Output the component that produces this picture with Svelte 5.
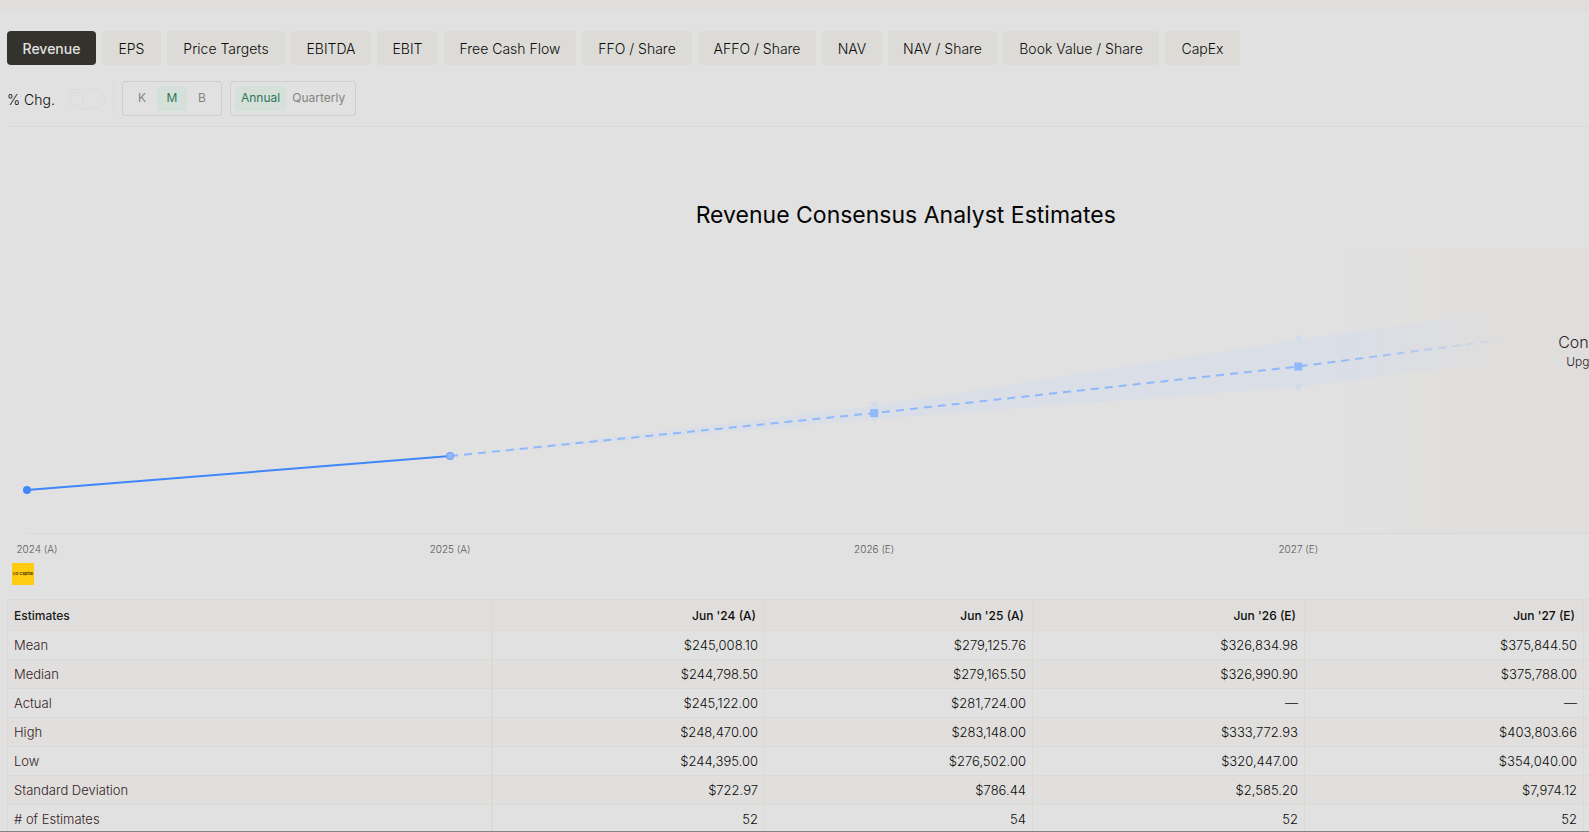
<script lang="ts">
  const metrics: Array<string> = [
    "Revenue", "EPS", "Price Targets", "EBITDA", "EBIT", "Free Cash Flow",
    "FFO / Share", "AFFO / Share", "NAV", "NAV / Share", "Book Value / Share", "CapEx"
  ];
  const units: Array<string> = ["K", "M", "B"];
  const periods: Array<string> = ["Annual", "Quarterly"];

  let metric = $state("Revenue");
  let unit = $state("M");
  let period = $state("Annual");
  let change = $state(false);

  const columns = ["Jun '24 (A)", "Jun '25 (A)", "Jun '26 (E)", "Jun '27 (E)"];
  const rows = [
    { name: "Mean", values: ["$245,008.10", "$279,125.76", "$326,834.98", "$375,844.50"] },
    { name: "Median", values: ["$244,798.50", "$279,165.50", "$326,990.90", "$375,788.00"] },
    { name: "Actual", values: ["$245,122.00", "$281,724.00", "—", "—"] },
    { name: "High", values: ["$248,470.00", "$283,148.00", "$333,772.93", "$403,803.66"] },
    { name: "Low", values: ["$244,395.00", "$276,502.00", "$320,447.00", "$354,040.00"] },
    { name: "Standard Deviation", values: ["$722.97", "$786.44", "$2,585.20", "$7,974.12"] },
    { name: "# of Estimates", values: ["52", "54", "52", "52"] }
  ];

  // chart points, in viewBox units
  const points = [
    { x: 20, y: 242, high: 242, low: 242, label: "2024 (A)" },
    { x: 443, y: 208, high: 208, low: 208, label: "2025 (A)" },
    { x: 867, y: 165, high: 158, low: 171, label: "2026 (E)" },
    { x: 1291, y: 118.5, high: 91.5, low: 139, label: "2027 (E)" },
    { x: 1715, y: 63, high: 32, low: 85, label: "" }
  ];
  const path = (list: Array<{ x: number, y: number }>) => list.map(p => `${p.x},${p.y}`).join(" ");
  const actual = path(points.slice(0, 2));
  const estimate = path(points.slice(1));
  const band = points.slice(1).map(p => `${p.x},${p.high}`)
    .concat(points.slice(1).reverse().map(p => `${p.x},${p.low}`))
    .join(" ");
</script>

<main class="page">
  <div class="strip"></div>
  <div class="panel">
    <nav class="tabs">
      {#each metrics as name}
        <button class="tab" class:active={name == metric} onclick={() => metric = name}>{name}</button>
      {/each}
    </nav>

    <div class="controls">
      <label class="change" for="change">% Chg.</label>
      <input id="change" class="toggle" type="checkbox" bind:checked={change} />
      <div class="divider"></div>
      <div class="group units">
        {#each units as name}
          <button class="option" class:selected={name == unit} onclick={() => unit = name}>{name}</button>
        {/each}
      </div>
      <div class="group">
        {#each periods as name}
          <button class="option" class:selected={name == period} onclick={() => period = name}>{name}</button>
        {/each}
      </div>
    </div>

    <h2>Revenue Consensus Analyst Estimates</h2>

    <div class="chart">
      <svg viewBox="0 0 1797 315">
        <polygon points={band} fill="#d9dee7" />
        <line x1="20" y1="285.5" x2="1777" y2="285.5" stroke="#d8d8d6" />
        <polyline points={actual} fill="none" stroke="#3f87fb" stroke-width="2" />
        <polyline points={estimate} fill="none" stroke="#91b8fb" stroke-width="2" stroke-dasharray="8 6" />
        {#each points.slice(2) as p}
          <path d="M{p.x - 4} {p.high - 4}h8l-4 8z" fill="#d2dbea" />
          <path d="M{p.x - 4} {p.low - 3}h8l-4 8z" fill="#d2dbea" />
          <rect x={p.x - 4} y={p.y - 4} width="8" height="8" fill="#91b8fb" />
        {/each}
        <circle cx="20" cy="242" r="4" fill="#3f87fb" />
        <circle cx="443" cy="208" r="3.5" fill="#91b8fb" stroke="#6c9ff8" />
        <!-- the first label is kept inside the plot's left edge -->
        {#each points as p}
          <text x={Math.max(p.x, 30)} y="305" text-anchor="middle">{p.label}</text>
        {/each}
      </svg>
      <div class="locked">
        <div class="message">
          <strong>Con</strong>
          <a href="#upgrade">Upg</a>
        </div>
      </div>
    </div>

    <svg class="logo" viewBox="0 0 22 22">
      <rect width="22" height="22" fill="#ffcc11" />
      <text x="11" y="12" text-anchor="middle">I/O Capital</text>
    </svg>

    <table>
      <colgroup>
        <col class="name" />
        <col class="c24" />
        <col class="c25" />
        <col class="c26" />
        <col class="c27" />
        <col />
      </colgroup>
      <thead>
        <tr>
          <th scope="col">Estimates</th>
          {#each columns as column}
            <th scope="col">{column}</th>
          {/each}
          <td></td>
        </tr>
      </thead>
      <tbody>
        {#each rows as row}
          <tr>
            <th scope="row">{row.name}</th>
            {#each row.values as value}
              <td>{value}</td>
            {/each}
            <td></td>
          </tr>
        {/each}
      </tbody>
    </table>
  </div>
</main>

<style>
  :global(body) {
    background-color: #e1e1e1;
  }
  .page {
    box-sizing: border-box;
    height: 100vh;
    overflow: hidden;
    border-bottom: 1px solid #858585;
    font-family: Inter, sans-serif;
    font-weight: 300;
    color: #0c0b0a;
  }
  .strip {
    height: 12px;
    background-color: #dfdedc;
  }
  /* wider than the window, the right side runs off the page */
  .panel {
    box-sizing: border-box;
    width: 114%;
    padding: 19px 7px 0;
  }
  button {
    font-family: inherit;
    font-weight: inherit;
    border: none;
    cursor: pointer;
  }
  .tabs {
    display: grid;
    grid-template-columns: 89px 59px 118px 80px 61px 132px 110px 118px 60px 109px 156px 75px;
    gap: 6px;
  }
  .tab {
    height: 34px;
    padding: 0;
    border-radius: 4px;
    background-color: #dcdbd7;
    color: #0c0b0a;
    font-size: 14px;
    white-space: nowrap;
  }
  .tab.active {
    background-color: #34322d;
    color: #e1e1e1;
    font-weight: 500;
  }
  .controls {
    display: flex;
    align-items: center;
    height: 35px;
    padding: 16px 0 10px;
    border-bottom: 1px solid #dadad9;
  }
  .change {
    width: 60px;
    padding-top: 2px;
    font-size: 14px;
  }
  .toggle {
    appearance: none;
    box-sizing: border-box;
    width: 38px;
    height: 20px;
    margin: 0 8px 0 0;
    padding: 2px;
    border: 1px solid #dcdbd7;
    border-radius: 10px;
  }
  .toggle::before {
    content: "";
    display: block;
    box-sizing: border-box;
    width: 14px;
    height: 14px;
    border: 1px solid #dcdbd7;
    border-radius: 50%;
  }
  .toggle:checked::before {
    margin-left: auto;
  }
  .divider {
    width: 1px;
    height: 35px;
    margin-right: 8px;
    background-color: #dadad8;
  }
  .group {
    display: flex;
    box-sizing: border-box;
    height: 35px;
    margin-right: 8px;
    padding: 4px;
    border: 1px solid #cfcec9;
    border-radius: 3px;
  }
  .option {
    height: 25px;
    padding: 0 6px 2px;
    border-radius: 3px;
    background-color: transparent;
    color: #85837f;
    font-size: 12px;
    font-weight: 400;
  }
  .units .option {
    width: 30px;
  }
  .option.selected {
    background-color: #d6e0db;
    color: #2b7956;
  }
  h2 {
    margin: 72px 0 0;
    color: #050505;
    font-size: 23px;
    line-height: 32px;
    font-weight: 400;
    text-align: center;
  }
  .chart {
    position: relative;
    margin-top: 17px;
  }
  .chart svg {
    display: block;
    width: 100%;
  }
  .chart text {
    fill: #5c5957;
    font-size: 10px;
  }
  /* paywall fade over the later estimates */
  .locked {
    position: absolute;
    top: 0;
    right: 0;
    bottom: 30px;
    width: 26%;
    background: linear-gradient(to right, #e0dedc00, #e0dedc 38%);
  }
  .message {
    display: flex;
    flex-direction: column;
    padding: 84px 0 0 221px;
    color: #2d211f;
    font-size: 12px;
    line-height: 20px;
  }
  .message strong {
    font-size: 16px;
    font-weight: 300;
  }
  .message a {
    padding-left: 8px;
    color: inherit;
    text-decoration: none;
  }
  .logo {
    display: block;
    width: 22px;
    height: 22px;
    margin: 0 0 14px 5px;
  }
  .logo text {
    fill: #332a08;
    font-size: 4px;
    font-weight: 600;
  }
  table {
    width: 100%;
    table-layout: fixed;
    border-collapse: collapse;
    font-size: 13px;
  }
  .name {
    width: 484px;
  }
  .c24 {
    width: 273px;
  }
  .c25 {
    width: 268px;
  }
  .c26 {
    width: 272px;
  }
  .c27 {
    width: 279px;
  }
  th, td {
    box-sizing: border-box;
    height: 29px;
    padding: 0 6px;
    border: 1px solid #dbdad6;
    font-weight: 300;
    text-align: right;
  }
  th:first-child {
    border-right-width: 2px;
    color: #35211e;
    text-align: left;
  }
  thead th {
    height: 31px;
    padding: 0 8px;
    font-size: 12px;
    font-weight: 500;
  }
  thead th:first-child {
    padding: 0 6px;
    color: #1c1b19;
  }
  thead tr {
    background-color: #dfdedc;
  }
  tbody tr:nth-child(even) {
    background-color: #e0dfdd;
  }
</style>
